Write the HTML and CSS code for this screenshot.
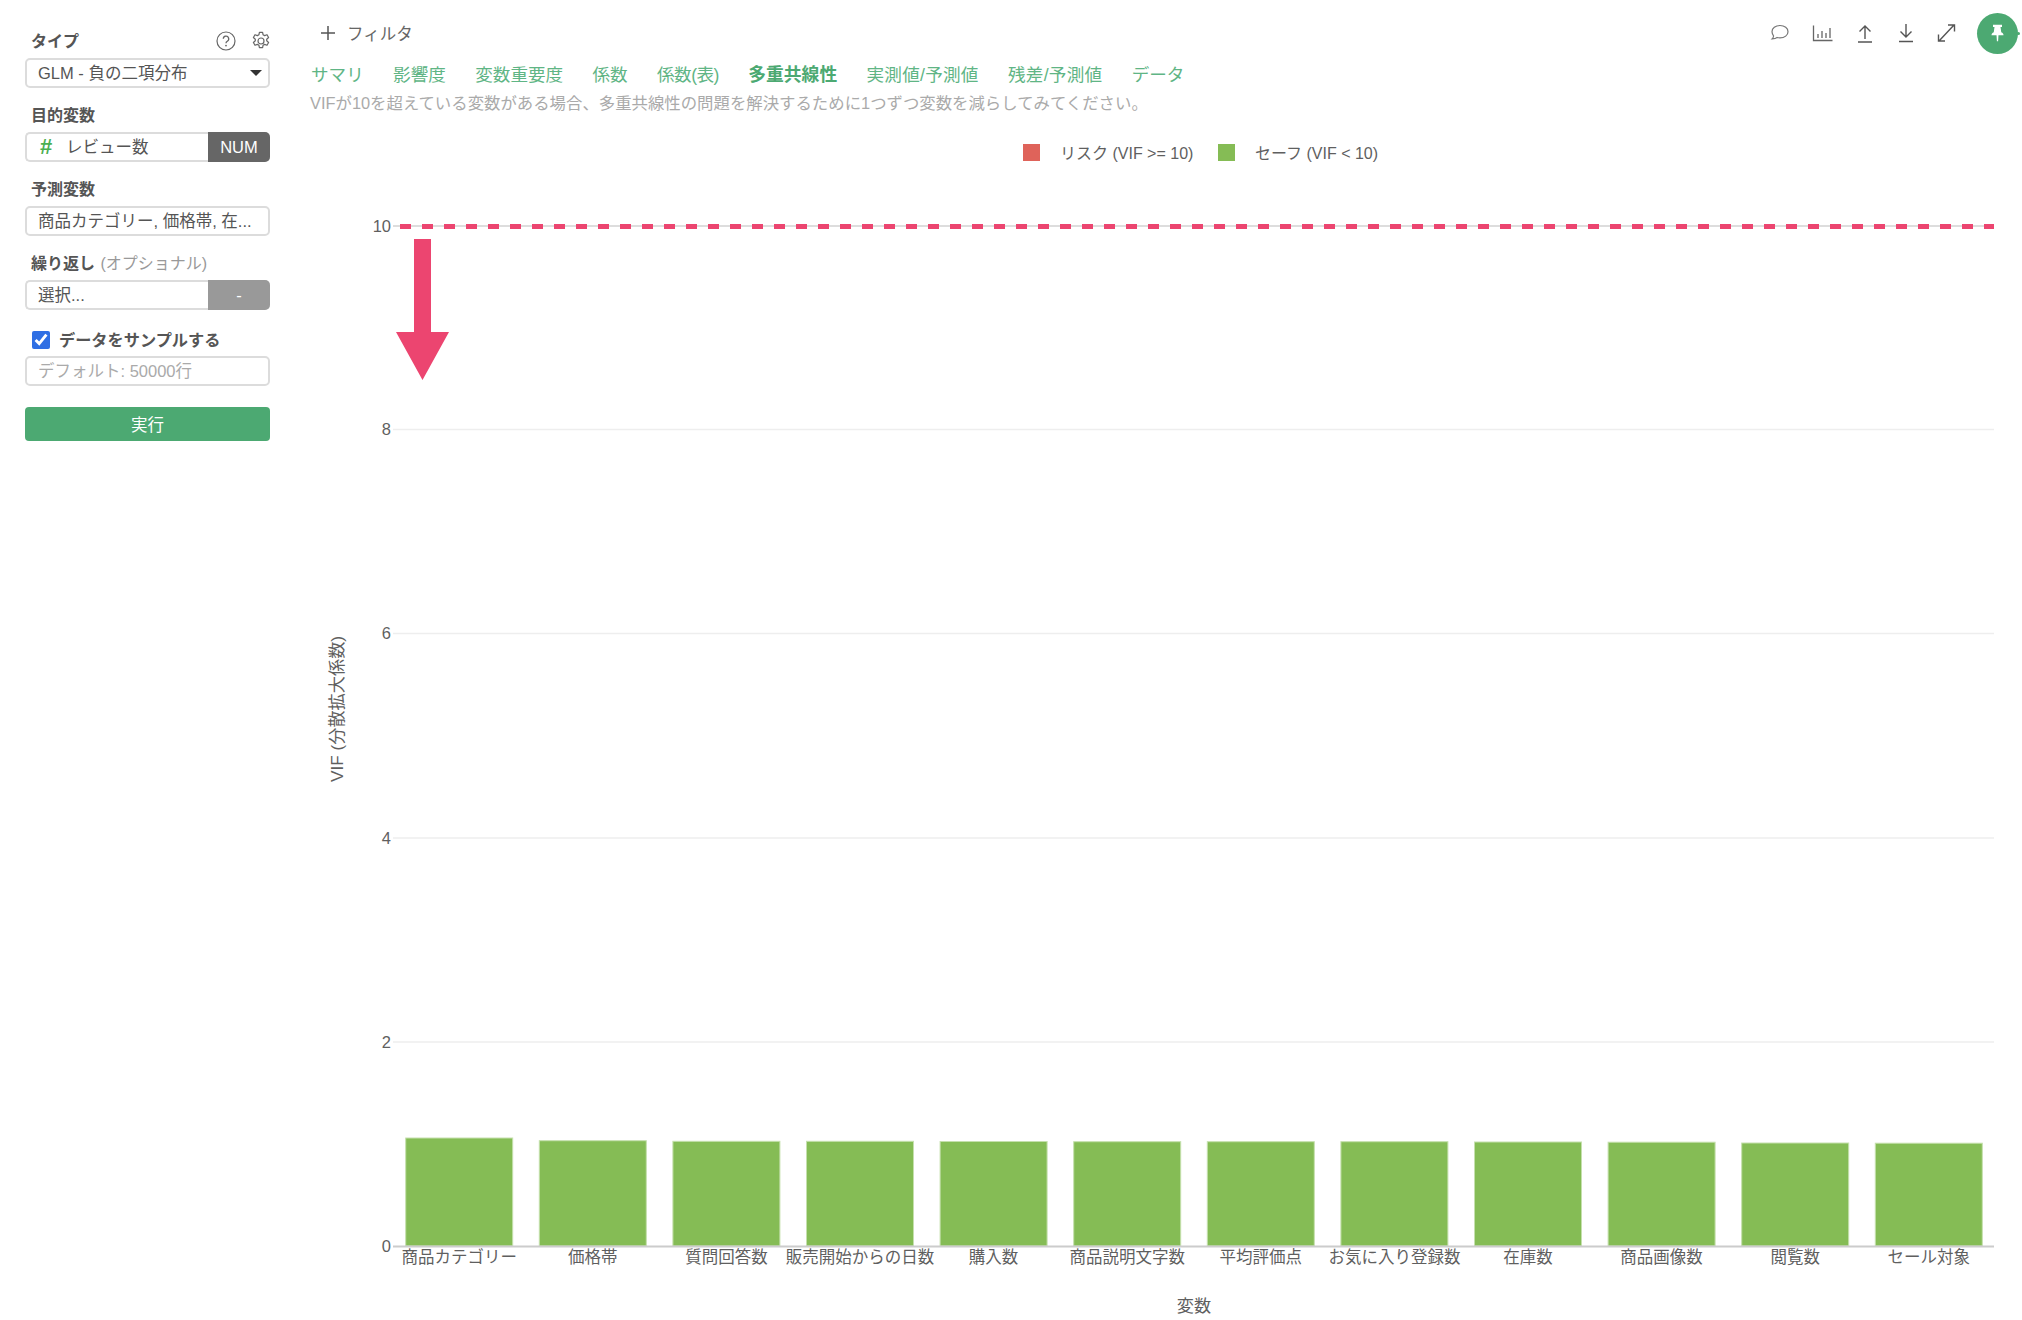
FILE: index.html
```html
<!DOCTYPE html>
<html lang="ja">
<head>
<meta charset="utf-8">
<title>VIF</title>
<link rel="stylesheet" href="styles.css">
</head>
<body>
<div class="app">
  <aside class="sidebar">
    <div class="label-row first">
      <span class="label">タイプ</span>
      <span class="label-icons">
        <svg class="side-icon" viewBox="0 0 20 20"><circle cx="10" cy="10" r="9" fill="none" stroke="#666" stroke-width="1.2"/><path d="M7.3 7.8a2.7 2.7 0 1 1 4 2.4c-.9.5-1.3 1-1.3 2" fill="none" stroke="#666" stroke-width="1.3"/><circle cx="10" cy="14.6" r=".9" fill="#666"/></svg>
        <svg class="side-icon" viewBox="0 0 20 20"><path d="M8.4 1.3h3.2l.5 2.5 1.5.8 2.4-.9 1.6 2.8-1.9 1.7v1.6l1.9 1.7-1.6 2.8-2.4-.9-1.5.8-.5 2.5H8.4l-.5-2.5-1.5-.8-2.4.9-1.6-2.8 1.9-1.7V8.2L2.4 6.5 4 3.7l2.4.9 1.5-.8z" fill="none" stroke="#666" stroke-width="1.2" stroke-linejoin="round"/><circle cx="10" cy="10" r="3" fill="none" stroke="#666" stroke-width="1.2"/></svg>
      </span>
    </div>
    <div class="field select-field"><span class="field-text">GLM - 負の二項分布</span><span class="caret"></span></div>

    <div class="label-row"><span class="label">目的変数</span></div>
    <div class="field split">
      <span class="field-text hash-wrap"><span class="hash">#</span>レビュー数</span>
      <span class="tag tag-dark">NUM</span>
    </div>

    <div class="label-row"><span class="label">予測変数</span></div>
    <div class="field"><span class="field-text">商品カテゴリー, 価格帯, 在...</span></div>

    <div class="label-row"><span class="label">繰り返し <span class="optional">(オプショナル)</span></span></div>
    <div class="field split">
      <span class="field-text">選択...</span>
      <span class="tag tag-gray">-</span>
    </div>

    <label class="check-row"><input class="check" type="checkbox" checked><span class="label check-label">データをサンプルする</span></label>
    <div class="field"><span class="field-text placeholder">デフォルト: 50000行</span></div>

    <div class="run-btn">実行</div>
  </aside>

  <main class="main">
    <div class="toolbar">
      <div class="filter">
        <svg class="plus" viewBox="0 0 14 14"><path d="M7 0v14M0 7h14" stroke="#555" stroke-width="1.5"/></svg>
        <span>フィルタ</span>
      </div>
      <div class="actions">
        <svg class="tool-icon comment" viewBox="0 0 24 24"><path d="M12 4.5c4.6 0 8 2.6 8 6.2s-3.4 6.2-8 6.2c-1 0-2-.1-2.900-.4-1 .8-2.600 1.300-5 1.400.8-.8 1.300-1.700 1.500-2.900C4.900 13.900 4 12.400 4 10.700c0-3.600 3.400-6.200 8-6.200z" fill="none" stroke="#777" stroke-width="1.200"/></svg>
        <svg class="tool-icon" viewBox="0 0 24 24"><path d="M2.500 4.500v15h19" fill="none" stroke="#666" stroke-width="1.300"/><path d="M7 13v4M11 10v7M15 12v5M19 7v10" stroke="#666" stroke-width="1.300"/></svg>
        <svg class="tool-icon" viewBox="-1 0 24 24"><path d="M12 18V5M6.500 10.500 12 5l5.500 5.500M5 21h14" fill="none" stroke="#555" stroke-width="1.400"/></svg>
        <svg class="tool-icon" viewBox="-1 0 24 24"><path d="M12 3v13M6.500 10.500 12 16l5.500-5.500M5 20.500h14" fill="none" stroke="#555" stroke-width="1.400"/></svg>
        <svg class="tool-icon" viewBox="0 0 24 24"><path d="M5 20 20 4M14 4h6.500v6.500M4.500 13.500V20H11" fill="none" stroke="#555" stroke-width="1.400"/></svg>
        <div class="pin">
          <svg class="pin-icon" viewBox="0 0 20 24"><path d="M4 1h12v3h-2l1 7c2 .7 3 2 3 4H11.300l-.5 8h-1.600l-.5-8H2c0-2 1-3.300 3-4l1-7H4z" fill="#fff"/></svg>
        </div>
      </div>
    </div>

    <nav class="tabs">
      <span class="tab">サマリ</span>
      <span class="tab">影響度</span>
      <span class="tab">変数重要度</span>
      <span class="tab">係数</span>
      <span class="tab tab-tight">係数(表)</span>
      <span class="tab tab-active">多重共線性</span>
      <span class="tab tab-wide">実測値/予測値</span>
      <span class="tab tab-wide">残差/予測値</span>
      <span class="tab">データ</span>
    </nav>
    <p class="desc">VIFが10を超えている変数がある場合、多重共線性の問題を解決するために1つずつ変数を減らしてみてください。</p>

    <div class="chart-wrap">
      <svg class="chart" viewBox="300 130 1722 1190">
        <rect class="lg-red" x="1023" y="144" width="17" height="17"/>
        <text class="ct legend" x="1060" y="158.500">リスク (VIF &gt;= 10)</text>
        <rect class="lg-green" x="1218" y="144" width="17" height="17"/>
        <text class="ct legend" x="1255" y="158.500">セーフ (VIF &lt; 10)</text>

        <path class="grid" d="M393 429.500H1994M393 633.500H1994M393 838H1994M393 1042H1994"/>
        <path class="grid-dot" d="M393 226H1994"/>

        <text class="ct end" x="391" y="231.500">10</text>
        <text class="ct end" x="391" y="435">8</text>
        <text class="ct end" x="391" y="639">6</text>
        <text class="ct end" x="391" y="843.500">4</text>
        <text class="ct end" x="391" y="1047.500">2</text>
        <text class="ct end" x="391" y="1251.500">0</text>

        <rect class="bar" x="405.700" y="1138" width="107" height="108"/>
        <rect class="bar" x="539.300" y="1140.700" width="107" height="105.300"/>
        <rect class="bar" x="672.900" y="1141.300" width="107" height="104.700"/>
        <rect class="bar" x="806.500" y="1141.300" width="107" height="104.700"/>
        <rect class="bar" x="940.100" y="1141.500" width="107" height="104.500"/>
        <rect class="bar" x="1073.700" y="1141.700" width="107" height="104.300"/>
        <rect class="bar" x="1207.300" y="1141.700" width="107" height="104.300"/>
        <rect class="bar" x="1340.900" y="1141.700" width="107" height="104.300"/>
        <rect class="bar" x="1474.500" y="1142" width="107" height="104"/>
        <rect class="bar" x="1608.100" y="1142.200" width="107" height="103.800"/>
        <rect class="bar" x="1741.700" y="1143" width="107" height="103"/>
        <rect class="bar" x="1875.300" y="1143.200" width="107" height="102.800"/>
        <path class="axis" d="M393 1246.500H1994"/>

        <text class="ct mid" x="459.200" y="1263">商品カテゴリー</text>
        <text class="ct mid" x="592.800" y="1263">価格帯</text>
        <text class="ct mid" x="726.400" y="1263">質問回答数</text>
        <text class="ct mid" x="860" y="1263">販売開始からの日数</text>
        <text class="ct mid" x="993.600" y="1263">購入数</text>
        <text class="ct mid" x="1127.200" y="1263">商品説明文字数</text>
        <text class="ct mid" x="1260.800" y="1263">平均評価点</text>
        <text class="ct mid" x="1394.400" y="1263">お気に入り登録数</text>
        <text class="ct mid" x="1528" y="1263">在庫数</text>
        <text class="ct mid" x="1661.600" y="1263">商品画像数</text>
        <text class="ct mid" x="1795.200" y="1263">閲覧数</text>
        <text class="ct mid" x="1928.800" y="1263">セール対象</text>

        <text class="ct mid axis-title" x="1194" y="1312">変数</text>
        <text class="ct mid axis-title" transform="translate(343 709) rotate(-90)">VIF (分散拡大係数)</text>

        <path class="dash" d="M400 226.500H1994"/>
        <path class="arrow" d="M414 239h17v93h18l-26.500 48L396 332h18z"/>
      </svg>
    </div>
  </main>
</div>
</body>
</html>
```

FILE: styles.css
```css
* { box-sizing: border-box; }
html, body { margin: 0; padding: 0; background: #fff; }
body {
  width: 2022px;
  height: 1320px;
  overflow: hidden;
  font-family: "Liberation Sans", "Noto Sans CJK JP", sans-serif;
  font-size: 16px;
  color: #555;
}
.app { display: flex; height: 100%; }

/* sidebar */
.sidebar { width: 300px; flex: none; padding: 31px 30px 0 25px; }
.label-row {
  display: flex;
  justify-content: space-between;
  align-items: center;
  height: 22px;
  margin-top: 17px;
  margin-bottom: 5px;
  padding-left: 6px;
}
.label-row.first { margin-top: 0; }
.label { font-weight: 700; font-size: 16px; color: #555; line-height: 22px; }
.optional { font-weight: 400; color: #999; margin-left: 1px; }
.check-label { font-size: 16.200px; margin-left: -1px; }
.label-icons { display: flex; gap: 15px; margin-right: -1px; margin-top: -2px; }
.side-icon { width: 20px; height: 20px; display: block; }
.field {
  display: flex;
  align-items: center;
  height: 30px;
  width: 245px;
  border: 2px solid #dcdcdc;
  border-radius: 5px;
  padding-left: 11px;
  background: #fff;
}
.field-text { flex: 1; min-width: 0; white-space: nowrap; font-size: 16.500px; line-height: 26px; color: #555; }
.select-field { padding-right: 6px; }
.caret { width: 0; height: 0; border-left: 6px solid transparent; border-right: 6px solid transparent; border-top: 6px solid #333; }
.split { padding-left: 11px; border-right: 0; }
.hash-wrap { display: flex; align-items: center; }
.hash { color: #4caf50; font-weight: 700; font-size: 22px; width: 28px; padding-left: 2px; }
.tag {
  width: 62px;
  height: 30px;
  margin: -2px 0;
  display: flex;
  align-items: center;
  justify-content: center;
  border-radius: 0 5px 5px 0;
  color: #fff;
  font-size: 16.500px;
}
.tag-dark { background: #666; }
.tag-gray { background: #999; }
.check-row { display: flex; align-items: center; height: 20px; margin-top: 20px; margin-bottom: 6px; padding-left: 7px; gap: 10px; }
.check { width: 18px; height: 18px; margin: 0; accent-color: #2f6fe4; }
.placeholder { color: #aaa; }
.run-btn {
  width: 245px;
  height: 34px;
  margin-top: 21px;
  background: #4ca972;
  border-radius: 4px;
  color: #fff;
  font-size: 16.500px;
  display: flex;
  align-items: center;
  justify-content: center;
}

/* main */
.main { flex: 1; min-width: 0; display: flex; flex-direction: column; }
.toolbar { display: flex; align-items: center; justify-content: space-between; height: 66px; padding: 0 4px 0 21px; }
.filter { display: flex; align-items: center; gap: 12px; font-size: 16.500px; color: #666; }
.plus { width: 14px; height: 14px; display: block; }
.actions { display: flex; align-items: center; gap: 17px; }
.tool-icon { width: 24px; height: 24px; display: block; }
.comment { margin-right: 2px; }
.pin {
  position: relative;
  width: 41px;
  height: 41px;
  margin-left: 2px;
  border-radius: 50%;
  background: #4ca972;
  display: flex;
  align-items: center;
  justify-content: center;
}
.pin::after {
  content: "";
  position: absolute;
  right: -2px;
  top: 19px;
  width: 3px;
  height: 3px;
  border-radius: 50%;
  background: #4ca972;
}
.pin-icon { width: 15px; height: 18px; display: block; }
.tabs { display: flex; gap: 29.300px; height: 18px; align-items: center; padding-left: 11px; }
.tab { font-size: 17.600px; line-height: 18px; color: #5fb585; white-space: nowrap; }
.tab-tight { letter-spacing: -0.5px; }
.tab-wide { letter-spacing: 0.250px; }
.tab-active { font-weight: 700; font-size: 17.800px; color: #4ca972; }
.desc { margin: 8px 0 0; padding-left: 10px; height: 22px; line-height: 22px; font-size: 16.400px; color: #aaa; white-space: nowrap; }
.chart-wrap { margin-top: 16px; flex: 1; min-height: 0; }
.chart { display: block; width: 1722px; height: 1190px; }

/* chart marks */
.ct { font-family: "Liberation Sans", "Noto Sans CJK JP", sans-serif; font-size: 16.500px; fill: #5f5f5f; }
.legend { font-size: 16px; }
.axis-title { font-size: 17.200px; }
.end { text-anchor: end; }
.mid { text-anchor: middle; }
.lg-red { fill: #df635a; }
.lg-green { fill: #85bc55; }
.grid { fill: none; stroke: #eee; stroke-width: 1.500; }
.grid-dot { fill: none; stroke: #ddd; stroke-width: 2; }
.axis { fill: none; stroke: #ccc; stroke-width: 2; }
.bar { fill: #85bc55; stroke: #c5e0ad; stroke-width: 1; }
.dash { fill: none; stroke: #ec4570; stroke-width: 5; stroke-dasharray: 11 11; }
.arrow { fill: #ec4570; }
```
